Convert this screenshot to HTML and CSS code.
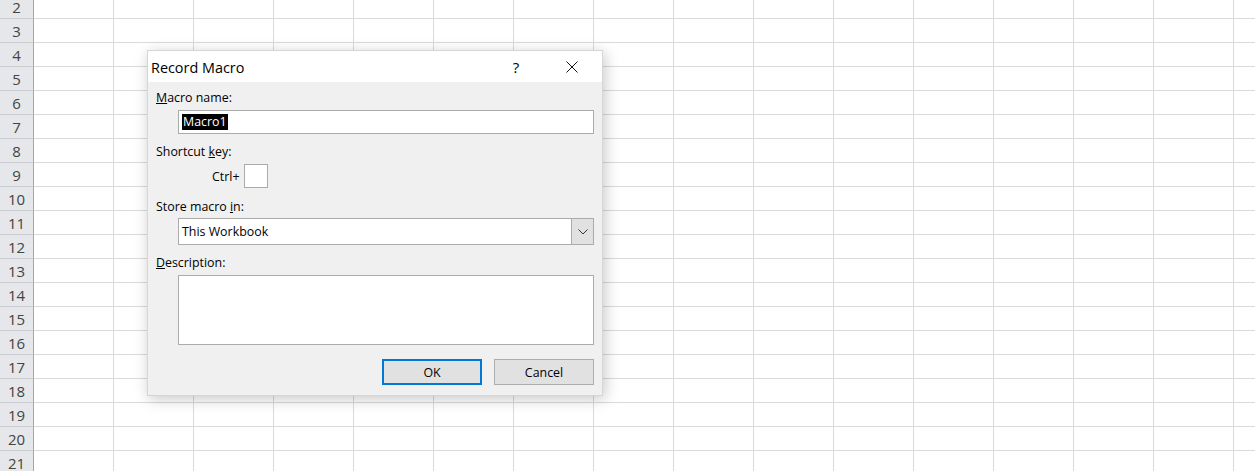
FILE: index.html
```html
<!DOCTYPE html>
<html lang="en">
<head>
    <meta charset="UTF-8">
    <meta name="viewport" content="width=device-width, initial-scale=1.0">
    <title>Record Macro</title>
    <link rel="stylesheet" href="styles.css">
</head>
<body>
    <div class="sheet">
        <div class="row"><div class="hdr">2</div><div class="cells"></div></div>
        <div class="row"><div class="hdr">3</div><div class="cells"></div></div>
        <div class="row"><div class="hdr">4</div><div class="cells"></div></div>
        <div class="row"><div class="hdr">5</div><div class="cells"></div></div>
        <div class="row"><div class="hdr">6</div><div class="cells"></div></div>
        <div class="row"><div class="hdr">7</div><div class="cells"></div></div>
        <div class="row"><div class="hdr">8</div><div class="cells"></div></div>
        <div class="row"><div class="hdr">9</div><div class="cells"></div></div>
        <div class="row"><div class="hdr">10</div><div class="cells"></div></div>
        <div class="row"><div class="hdr">11</div><div class="cells"></div></div>
        <div class="row"><div class="hdr">12</div><div class="cells"></div></div>
        <div class="row"><div class="hdr">13</div><div class="cells"></div></div>
        <div class="row"><div class="hdr">14</div><div class="cells"></div></div>
        <div class="row"><div class="hdr">15</div><div class="cells"></div></div>
        <div class="row"><div class="hdr">16</div><div class="cells"></div></div>
        <div class="row"><div class="hdr">17</div><div class="cells"></div></div>
        <div class="row"><div class="hdr">18</div><div class="cells"></div></div>
        <div class="row"><div class="hdr">19</div><div class="cells"></div></div>
        <div class="row"><div class="hdr">20</div><div class="cells"></div></div>
        <div class="row"><div class="hdr">21</div><div class="cells"></div></div>
    </div>

    <div class="dialog">
        <div class="titlebar">
            <span class="title">Record Macro</span>
            <span class="help">?</span>
            <span class="close">
                <svg width="12" height="12" viewBox="0 0 12 12">
                    <path d="M0.5 0.5 L11.5 11.5 M11.5 0.5 L0.5 11.5" stroke="#111" stroke-width="1" fill="none"/>
                </svg>
            </span>
        </div>
        <div class="body">
            <div class="label"><u>M</u>acro name:</div>
            <div class="field"><span class="selected">Macro1</span></div>

            <div class="label gap"><span>Shortcut </span><u>k</u>ey:</div>
            <div class="ctrl-row">
                <span class="ctrl">Ctrl+</span>
                <span class="keybox"></span>
            </div>

            <div class="label gap">Store macro <u>i</u>n:</div>
            <div class="select">
                <span class="select-text">This Workbook</span>
                <span class="arrow">
                    <svg width="10" height="6" viewBox="0 0 10 6">
                        <path d="M0.5 0.5 L5 5 L9.5 0.5" stroke="#333" stroke-width="1" fill="none"/>
                    </svg>
                </span>
            </div>

            <div class="label gap"><u>D</u>escription:</div>
            <div class="textarea"></div>

            <div class="buttons">
                <span class="btn default">OK</span>
                <span class="btn">Cancel</span>
            </div>
        </div>
    </div>
</body>
</html>
```

FILE: styles.css
```css
body {
    margin: 0;
    padding: 0;
    background-color: #fff;
    font-family: "Open Sans", "Noto Sans", sans-serif;
    overflow: hidden;
}
.sheet {
    margin-top: -5px;
}
.row {
    display: flex;
    height: 23px;
    border-bottom: 1px solid #dadada;
}
.hdr {
    width: 33px;
    flex: none;
    background-color: #e5e7ea;
    border-right: 1px solid #a6a6a6;
    border-bottom: 1px solid #c9cbce;
    margin-bottom: -1px;
    color: #444;
    font-size: 15px;
    line-height: 25px;
    text-align: center;
}
.cells {
    flex: 1;
    background: repeating-linear-gradient(to right, transparent 0, transparent 79px, #dadada 79px, #dadada 80px);
}

.dialog {
    position: absolute;
    left: 147px;
    top: 50px;
    width: 456px;
    height: 346px;
    box-sizing: border-box;
    background-color: #f0f0f0;
    border: 1px solid #d6d6d6;
    box-shadow: 2px 3px 14px rgba(0, 0, 0, 0.22);
    font-size: 12.4px;
    color: #000;
}
.titlebar {
    display: flex;
    align-items: center;
    height: 31px;
    background-color: #fff;
    padding-left: 3px;
    padding-right: 15px;
}
.title {
    font-size: 14.4px;
    flex: 1;
    padding-top: 1px;
}
.help {
    width: 30px;
    text-align: center;
    font-size: 15px;
    margin-right: 26px;
}
.close {
    width: 30px;
    display: flex;
    justify-content: center;
}
.body {
    padding: 8px 8px 0 8px;
}
.label {
    line-height: 16px;
    height: 16px;
}
.label.gap {
    margin-top: 10px;
}
.field,
.select,
.textarea {
    margin-left: 22px;
    margin-top: 4px;
    background-color: #fff;
    border: 1px solid #ababab;
    box-sizing: border-box;
}
.field {
    height: 24px;
    display: flex;
    align-items: center;
    padding-left: 3px;
}
.selected {
    background-color: #000;
    color: #fff;
    line-height: 16px;
    padding: 0 1px;
}
.ctrl-row {
    display: flex;
    align-items: center;
    margin-top: 4px;
    padding-left: 56px;
}
.ctrl {
    margin-right: 4px;
}
.keybox {
    width: 24px;
    height: 24px;
    box-sizing: border-box;
    background-color: #fff;
    border: 1px solid #ababab;
}
.ctrl-row + .label.gap {
    margin-top: 11px;
}
.select {
    height: 27px;
    display: flex;
    align-items: center;
    margin-top: 3px;
}
.select-text {
    flex: 1;
    padding-left: 3px;
}
.arrow {
    width: 21px;
    height: 25px;
    background-color: #e1e1e1;
    border-left: 1px solid #ababab;
    display: flex;
    align-items: center;
    justify-content: center;
}
.select + .label.gap {
    margin-top: 10px;
}
.textarea {
    height: 70px;
}
.buttons {
    display: flex;
    justify-content: flex-end;
    gap: 12px;
    margin-top: 14px;
}
.btn {
    width: 100px;
    height: 26px;
    box-sizing: border-box;
    background-color: #e1e1e1;
    border: 1px solid #adadad;
    display: flex;
    align-items: center;
    justify-content: center;
}
.btn.default {
    border: 2px solid #0078d7;
}
```
